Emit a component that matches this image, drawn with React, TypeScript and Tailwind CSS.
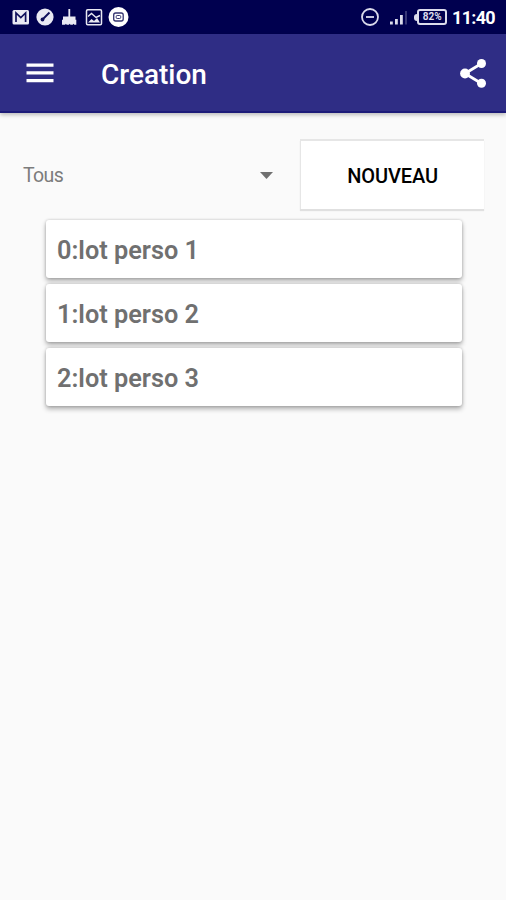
import { ReactNode } from 'react';

const lots = ['lot perso 1', 'lot perso 2', 'lot perso 3'];

function NotificationIcons() {
  return (
    <div className="flex items-center gap-[5px] text-[#e9e9f3]">
      <svg width="20" height="20" viewBox="0 0 20 20">
        <rect x="1.5" y="3" width="16.5" height="14.5" rx="1.5" fill="currentColor" />
        <path d="M5 15V6l4.8 4.5L14.6 6v9" fill="none" stroke="#10105c" strokeWidth="1.7" />
      </svg>
      <svg width="19" height="20" viewBox="0 0 19 20">
        <circle cx="9" cy="10" r="8.6" fill="currentColor" />
        <path d="M7 12l6.5-6.5" stroke="#10105c" strokeWidth="2" />
        <circle cx="6.5" cy="12.5" r="1.9" fill="#10105c" />
      </svg>
      <svg width="19" height="20" viewBox="0 0 19 20">
        <path
          d="M8.4 2h1.800v7.500h5.300v3.300h.8v5h-2l-.8-1-.8 1h-2.200l-.8-1-.8 1H6.700l-.8-1-.8 1H2v-5h1V9.500h5.400z"
          fill="currentColor"
        />
      </svg>
      <svg width="20" height="20" viewBox="0 0 20 20">
        <rect x="2.5" y="2.7" width="15" height="15" rx="1.2" fill="none" stroke="currentColor" strokeWidth="1.5" />
        <path d="M4 9.500l3.500-3 4.500 4 4-2" fill="none" stroke="currentColor" strokeWidth="1.4" />
        <path d="M4 15.500l3.500-3.500 2.500 2 3-3 3 4.500z" fill="currentColor" />
      </svg>
      <svg width="21" height="22" viewBox="0 0 21 22" className="-ml-[1px]">
        <circle cx="10.5" cy="11" r="10" fill="#fff" />
        <rect x="5.7" y="7" width="9.5" height="8" rx="2" fill="none" stroke="#33336f" strokeWidth="1.3" />
        <rect x="8.2" y="9.5" width="4.5" height="3" rx="1" fill="none" stroke="#33336f" strokeWidth="1" />
      </svg>
    </div>
  );
}

function StatusBar() {
  return (
    <div className="flex h-[34px] items-center justify-between bg-[#00004f] pr-[11px] pl-[11px] text-[#dcdcec]">
      <NotificationIcons />
      <div className="flex items-center">
        <svg width="20" height="20" viewBox="0 0 20 20" fill="none" stroke="currentColor">
          <circle cx="10" cy="10" r="8" strokeWidth="1.8" />
          <path d="M6 10h8" strokeWidth="1.8" />
        </svg>
        <svg width="19" height="20" viewBox="0 0 19 20" className="ml-[9px]" fill="currentColor">
          <rect x="1" y="14.5" width="2.8" height="3" />
          <rect x="6" y="12" width="2.8" height="5.5" />
          <rect x="11" y="8" width="2.8" height="9.5" />
          <rect x="16" y="4" width="2" height="13.5" opacity=".25" />
        </svg>
        <div className="ml-[6px] flex items-center">
          <span className="h-[7px] w-[3px] rounded-l-sm bg-[#dcdcec]" />
          <span className="flex h-[16px] w-[30px] items-center justify-center rounded-[3px] border-2 border-[#dcdcec] text-[10px] leading-none font-bold">
            82%
          </span>
        </div>
        <span className="ml-[5px] pt-px text-[18px] leading-none font-bold tracking-[-0.7px] text-white">
          11:40
        </span>
      </div>
    </div>
  );
}

function AppBar() {
  return (
    <header className="flex h-[79px] items-center border-b-2 border-[#1c1a78] bg-[#2f2d85] pr-[17px] pl-[26px] text-white shadow-[0_2px_4px_rgba(0,0,0,0.25)]">
      <button>
        <svg width="28" height="20" viewBox="0 0 28 20" fill="currentColor">
          <path d="M.5.500h27v3.200H.5zM.5 8.300h27v3.200H.5zM.5 16h27v3.200H.5z" />
        </svg>
      </button>
      <h1 className="ml-[47px] pt-[5px] text-[28px] leading-none font-medium">Creation</h1>
      <button className="ml-auto">
        <svg width="30" height="32" viewBox="0 0 30 32" fill="currentColor">
          <path d="M22.500 6.500L6 16.500l16.500 10" fill="none" stroke="currentColor" strokeWidth="2.8" />
          <circle cx="22.5" cy="6.5" r="4.5" />
          <circle cx="6" cy="16.5" r="4.9" />
          <circle cx="22.5" cy="26.3" r="4.5" />
        </svg>
      </button>
    </header>
  );
}

function Card({ children }: { children: ReactNode }) {
  return (
    <li className="flex h-[58px] items-center rounded-[3px] bg-white pt-[3px] pl-[11px] text-[25.3px] leading-none font-semibold text-[#707070] shadow-[0_3px_5px_rgba(0,0,0,0.3),0_0_3px_rgba(0,0,0,0.2)]">
      {children}
    </li>
  );
}

export default function App() {
  return (
    <div className="min-h-screen bg-[#fafafa] font-[Roboto,sans-serif]">
      <StatusBar />
      <AppBar />
      <main>
        <div className="flex items-center pt-[26px] pr-[22px] pl-[23px]">
          <button className="flex w-[250px] items-center justify-between pt-[3px] text-[19.5px] leading-none tracking-[-0.6px] text-[#7c7c7c]">
            <span className="pt-px">Tous</span>
            <svg width="13" height="7" viewBox="0 0 13 7" fill="#707070">
              <path d="M0 0h13L6.500 7z" />
            </svg>
          </button>
          <button className="ml-[27px] h-[70px] flex-1 border-t-2 border-l border-[#e6e6e6] bg-white pt-px text-[20px] leading-none font-medium tracking-[-0.1px] text-black shadow-[0_2px_1px_rgba(0,0,0,0.1)]">
            NOUVEAU
          </button>
        </div>
        <ul className="mt-[11px] mr-[44px] ml-[46px] flex flex-col gap-[6px]">
          {lots.map((lot, index) => (
            <Card key={lot}>
              {index}:{lot}
            </Card>
          ))}
        </ul>
      </main>
    </div>
  );
}
